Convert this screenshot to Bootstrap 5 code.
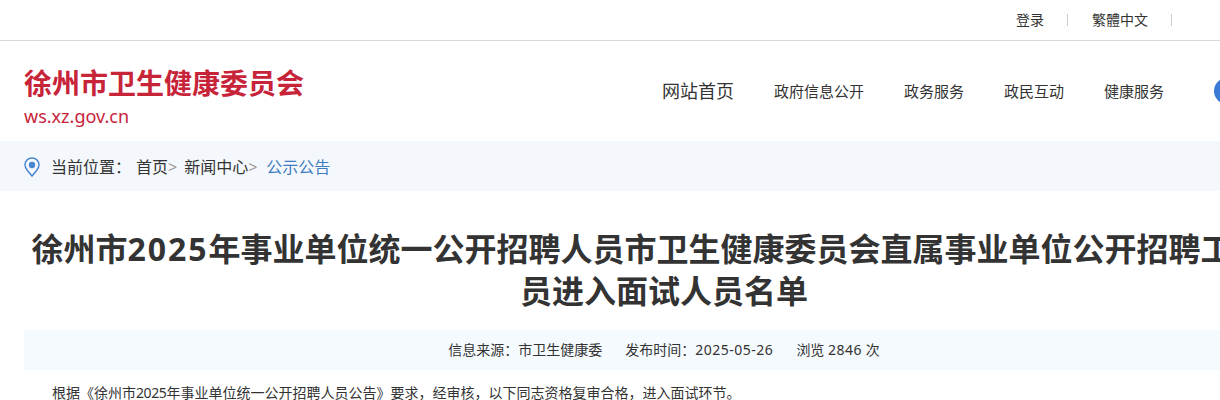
<!DOCTYPE html>
<html lang="zh"><head><meta charset="utf-8">
<link href="https://cdn.jsdelivr.net/npm/bootstrap@5.3.0/dist/css/bootstrap.min.css" rel="stylesheet">
<style>
html,body{overflow:hidden;height:400px}
body{font-family:"Noto Sans","Noto Sans CJK SC",sans-serif;color:#333;width:1220px}
.pg{width:1328px;padding:0 24px}
.topbar{height:41px;border-bottom:1px solid #d9d9d9;font-size:14px}
.topbar .inner{width:1220px;height:40px;padding-right:48px}
.topbar a{color:#333;text-decoration:none;padding:0 23px 0 24px;border-right:1px solid #ccc;line-height:12px;display:block;font-size:14px}
.brand-row{height:100px}
.site-name{font-size:28px;font-weight:700;color:#c7243a;line-height:34px;margin-top:25px}
.site-url{font-size:18px;color:#c7243a;line-height:24px;margin-top:4px}
.mainnav{font-size:15px;gap:40px;height:100px}
.mainnav a{color:#333;text-decoration:none}
.mainnav a.home{font-size:18px}
.search-dot{width:26px;height:26px;border-radius:50%;background:#3a7bd5;margin-left:10px}
.nav-end{width:24px}
.crumbs{height:50px;background:#f4f8fc;font-size:16px;color:#333}
.crumbs .pg{padding-top:2px}
.crumbs .sep{color:#999}
.crumbs .mid{margin-left:7px}
.crumbs .cur{color:#3f7cc0;margin-left:9px}
.crumbs svg{margin-right:11px}
.crumbs .lbl{margin-right:5px}
.art-title{font-size:32px;font-weight:700;line-height:42px;color:#333;text-align:center;margin:0;padding-top:37px}
.art-title .num{letter-spacing:2px}
.meta{height:40px;background:#f5fafe;margin-top:18px;padding-bottom:2px;font-size:14px;gap:23px}
.meta .num{letter-spacing:.5px}
.body-text{font-size:14px;line-height:20px;padding-left:28px;margin:13px 0 0;color:#333}
.body-text .num{letter-spacing:-.4px}
</style></head><body>
<div class="topbar"><div class="inner d-flex justify-content-end align-items-center"><a>登录</a><a>繁體中文</a></div></div>
<div class="pg">
<div class="brand-row d-flex justify-content-between">
<div><div class="site-name">徐州市卫生健康委员会</div><div class="site-url">ws.xz.gov.cn</div></div>
<nav class="mainnav d-flex align-items-center"><a class="home">网站首页</a><a>政府信息公开</a><a>政务服务</a><a>政民互动</a><a>健康服务</a><span class="search-dot"></span><span class="nav-end"></span></nav>
</div>
</div>
<div class="crumbs"><div class="pg h-100 d-flex align-items-center">
<svg width="16" height="20" viewBox="0 0 16 20"><path d="M8 1C4 1 1 4 1 7.8c0 2.2 1 3.900 2.400 5.600L8 19l4.600-5.600C14 11.700 15 10 15 7.800 15 4 12 1 8 1Z" fill="none" stroke="#4a86cf" stroke-width="1.500"/><circle cx="8" cy="8" r="3.200" fill="#4a86cf"/></svg>
<span class="lbl">当前位置&#xFF1A;</span><span>首页</span><span class="sep">&gt;</span><span class="mid">新闻中心</span><span class="sep">&gt;</span><span class="cur">公示公告</span></div></div>
<div class="pg">
<h1 class="art-title">徐州市<span class="num">2025</span>年事业单位统一公开招聘人员市卫生健康委员会直属事业单位公开招聘工作人员进入面试人员名单</h1>
<div class="meta d-flex justify-content-center align-items-center"><span>信息来源&#xFF1A;市卫生健康委</span><span>发布时间&#xFF1A;<span class="num">2025-05-26</span></span><span>浏览 <span class="num">2846</span> 次</span></div>
<p class="body-text">根据《徐州市<span class="num">2025</span>年事业单位统一公开招聘人员公告》要求&#xFF0C;经审核&#xFF0C;以下同志资格复审合格&#xFF0C;进入面试环节。</p>
</div>
</body></html>
